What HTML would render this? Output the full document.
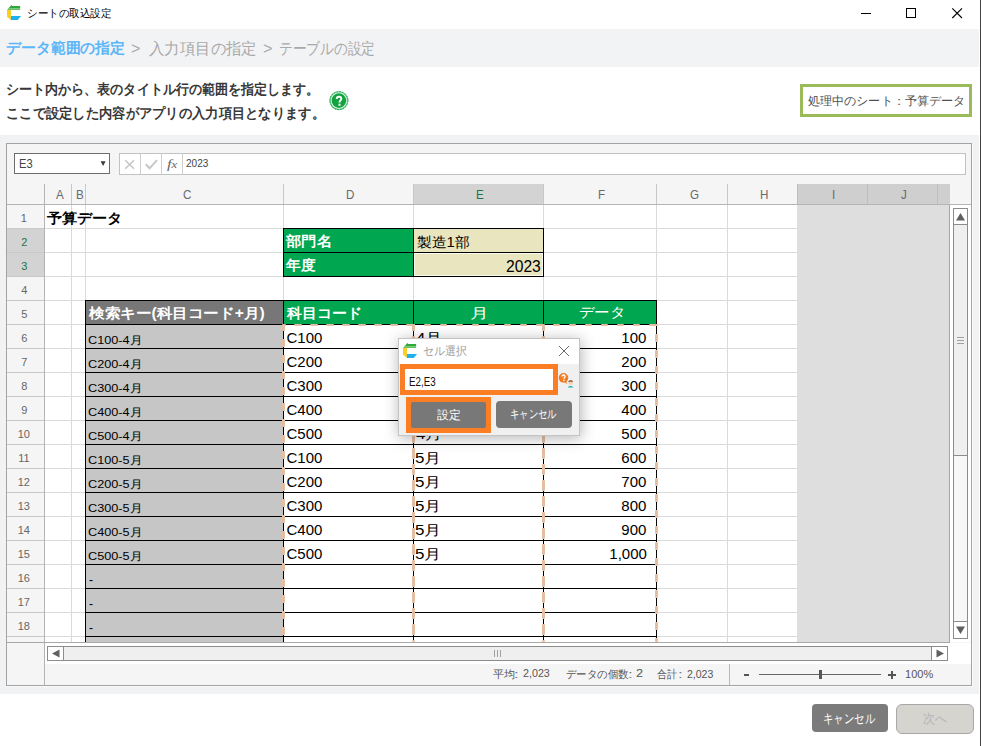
<!DOCTYPE html><html><head><meta charset="utf-8"><style>
*{margin:0;padding:0;box-sizing:border-box}
html,body{width:981px;height:746px;overflow:hidden;background:#fff;font-family:"Liberation Sans",sans-serif;position:relative}
.a{position:absolute}
.t{position:absolute;white-space:nowrap;line-height:1;transform-origin:0 0}
</style></head><body>
<svg class="a" style="left:6.95px;top:4.9px" width="16" height="17" viewBox="0 0 16 17">
<polygon points="0,5 4.45,0 5.25,1.1 13.15,1.1 13.15,3.4 1.9,3.4" fill="#2fa83a"/>
<polygon points="1.9,3.4 13.15,3.4 13.15,4.9 0,4.9 0,5" fill="#67bf5f"/>
<polygon points="0,4.9 3.95,4.9 3.95,14.9 0,11.8" fill="#fccf1f"/>
<polygon points="3.95,11 14.05,11 10.75,14.9 3.95,14.9" fill="#1eb1ef"/>
</svg>
<div class="t" style="left:26.54px;top:8.30px;font-size:11px;color:#000;font-weight:normal;font-family:'Liberation Sans',sans-serif;transform:scaleX(0.9593);">シートの取込設定</div>
<div class="a" style="left:861px;top:13px;width:10px;height:1px;background:#000"></div>
<div class="a" style="left:906px;top:8px;width:10px;height:10px;border:1px solid #000"></div>
<svg class="a" style="left:951px;top:7px" width="13" height="13" viewBox="0 0 13 13"><path d="M1.3 1.3L11 11M11 1.3L1.3 11" stroke="#000" stroke-width="1.1"/></svg>
<div class="a" style="left:980px;top:0px;width:1px;height:746px;background:#444"></div>
<div class="a" style="left:0px;top:29px;width:979px;height:38px;background:#f2f3f5"></div>
<div class="t" style="left:6.00px;top:40.00px;font-size:15px;color:#5cb6f8;font-weight:bold;font-family:'Liberation Sans',sans-serif;transform:scaleX(0.9917);">データ範囲の指定</div>
<div class="t" style="left:131.06px;top:39.80px;font-size:17px;color:#a9a9a9;font-weight:normal;font-family:'Liberation Sans',sans-serif;transform:scaleX(0.9444);">&gt;</div>
<div class="t" style="left:148.80px;top:40.50px;font-size:16px;color:#a9a9a9;font-weight:normal;font-family:'Liberation Sans',sans-serif;transform:scaleX(0.9622);">入力項目の指定</div>
<div class="t" style="left:263.03px;top:39.80px;font-size:17px;color:#a9a9a9;font-weight:normal;font-family:'Liberation Sans',sans-serif;transform:scaleX(0.9667);">&gt;</div>
<div class="t" style="left:278.94px;top:40.50px;font-size:16px;color:#a9a9a9;font-weight:normal;font-family:'Liberation Sans',sans-serif;transform:scaleX(0.8564);">テーブルの設定</div>
<div class="t" style="left:6.07px;top:82.00px;font-size:14px;color:#383838;font-weight:bold;font-family:'Liberation Sans',sans-serif;transform:scaleX(0.9325);">シート内から、表のタイトル行の範囲を指定します。</div>
<div class="t" style="left:6.05px;top:106.00px;font-size:14px;color:#383838;font-weight:bold;font-family:'Liberation Sans',sans-serif;transform:scaleX(0.9488);">ここで設定した内容がアプリの入力項目となります。</div>
<svg class="a" style="left:329px;top:91px" width="20" height="20" viewBox="0 0 20 20">
<circle cx="9.9" cy="9.6" r="9.6" fill="#7fd19a"/>
<circle cx="9.9" cy="9.6" r="8.9" fill="none" stroke="#1aa34a" stroke-width="1" stroke-dasharray="1.6 1.2"/>
<circle cx="9.9" cy="9.6" r="8.1" fill="#e8f7ec"/>
<circle cx="9.9" cy="9.6" r="7.3" fill="#12a340"/>
<path d="M7.7 8.0C7.7 6.4 8.7 5.7 10 5.7C11.4 5.7 12.3 6.5 12.3 7.7C12.3 9.3 10.5 9.5 10.5 11.4" stroke="#fff" stroke-width="1.9" fill="none"/>
<rect x="9.5" y="12.7" width="2" height="2.1" fill="#fff"/>
</svg>
<div class="a" style="left:800px;top:84px;width:172px;height:33px;border:3px solid #9bbb59"></div>
<div class="t" style="left:808.00px;top:94.80px;font-size:12px;color:#505050;font-weight:normal;font-family:'Liberation Sans',sans-serif;transform:scaleX(1.0078);">処理中のシート：予算データ</div>
<div class="a" style="left:0px;top:135px;width:979px;height:559px;background:#f1f2f4"></div>
<div class="a" style="left:6px;top:143px;width:966px;height:543px;border:1px solid #a3a3a3;background:#f5f5f5;box-shadow:1px 1px 0 #fafafa"></div>
<div class="a" style="left:14px;top:153px;width:96px;height:21px;border:1px solid #6d6d6d;background:#fff"></div>
<div class="t" style="left:18.91px;top:158.00px;font-size:12.5px;color:#444;font-weight:normal;font-family:'Liberation Sans',sans-serif;transform:scaleX(0.8929);">E3</div>
<svg class="a" style="left:100px;top:160px" width="7" height="7"><path d="M0.6 1.2L5.6 1.2L3.1 6Z" fill="#3a3a3a"/></svg>
<div class="a" style="left:119px;top:153px;width:847px;height:22px;border:1px solid #c2c2c2;background:#fff"></div>
<div class="a" style="left:140px;top:154px;width:1px;height:20px;background:#cfcfcf"></div>
<div class="a" style="left:161px;top:154px;width:1px;height:20px;background:#cfcfcf"></div>
<div class="a" style="left:182px;top:154px;width:1px;height:20px;background:#cfcfcf"></div>
<svg class="a" style="left:124px;top:159px" width="11" height="11"><path d="M1.2 1.2L10 9.8M10 1.2L1.2 9.8" stroke="#c6c6c6" stroke-width="1.6"/></svg>
<svg class="a" style="left:145px;top:159px" width="13" height="11"><path d="M0.8 5.2L4.6 9.3L12 1.2" stroke="#c6c6c6" stroke-width="2" fill="none"/></svg>
<div class="t" style="left:167.00px;top:157.20px;font-size:13px;color:#666;font-weight:normal;font-family:'Liberation Serif',serif;transform:scaleX(1.2750);"><i>f</i><span style="font-size:10px"><i>x</i></span></div>
<div class="t" style="left:185.60px;top:158.20px;font-size:11.5px;color:#444;font-weight:normal;font-family:'Liberation Sans',sans-serif;transform:scaleX(0.8731);">2023</div>
<div class="a" style="left:413px;top:184px;width:130px;height:20px;background:#d3d3d3"></div>
<div class="a" style="left:797px;top:184px;width:153px;height:20px;background:#cfcfcf"></div>
<div class="a" style="left:44px;top:184px;width:1px;height:20px;background:#c8c8c8"></div>
<div class="a" style="left:71px;top:184px;width:1px;height:20px;background:#c8c8c8"></div>
<div class="a" style="left:85px;top:184px;width:1px;height:20px;background:#c8c8c8"></div>
<div class="a" style="left:283px;top:184px;width:1px;height:20px;background:#c8c8c8"></div>
<div class="a" style="left:413px;top:184px;width:1px;height:20px;background:#c8c8c8"></div>
<div class="a" style="left:543px;top:184px;width:1px;height:20px;background:#c8c8c8"></div>
<div class="a" style="left:656px;top:184px;width:1px;height:20px;background:#c8c8c8"></div>
<div class="a" style="left:727px;top:184px;width:1px;height:20px;background:#c8c8c8"></div>
<div class="a" style="left:797px;top:184px;width:1px;height:20px;background:#bdbdbd"></div>
<div class="a" style="left:867px;top:184px;width:1px;height:20px;background:#bdbdbd"></div>
<div class="a" style="left:937px;top:184px;width:1px;height:20px;background:#bdbdbd"></div>
<div class="a" style="left:7px;top:204px;width:964px;height:1px;background:#b4b4b4"></div>
<div class="t" style="left:56.02px;top:189.00px;font-size:12px;color:#6a6a6a;font-weight:normal;font-family:'Liberation Sans',sans-serif;transform:scaleX(0.9700);">A</div>
<div class="t" style="left:76.04px;top:189.00px;font-size:12px;color:#6a6a6a;font-weight:normal;font-family:'Liberation Sans',sans-serif;transform:scaleX(0.9700);">B</div>
<div class="t" style="left:182.52px;top:189.00px;font-size:12px;color:#6a6a6a;font-weight:normal;font-family:'Liberation Sans',sans-serif;transform:scaleX(0.9700);">C</div>
<div class="t" style="left:346.03px;top:189.00px;font-size:12px;color:#6a6a6a;font-weight:normal;font-family:'Liberation Sans',sans-serif;transform:scaleX(0.9700);">D</div>
<div class="t" style="left:476.03px;top:189.00px;font-size:12px;color:#217346;font-weight:normal;font-family:'Liberation Sans',sans-serif;transform:scaleX(0.9700);">E</div>
<div class="t" style="left:598.02px;top:189.00px;font-size:12px;color:#6a6a6a;font-weight:normal;font-family:'Liberation Sans',sans-serif;transform:scaleX(0.9700);">F</div>
<div class="t" style="left:689.53px;top:189.00px;font-size:12px;color:#6a6a6a;font-weight:normal;font-family:'Liberation Sans',sans-serif;transform:scaleX(0.9700);">G</div>
<div class="t" style="left:760.03px;top:189.00px;font-size:12px;color:#6a6a6a;font-weight:normal;font-family:'Liberation Sans',sans-serif;transform:scaleX(0.9700);">H</div>
<div class="t" style="left:832.46px;top:189.00px;font-size:12px;color:#6a6a6a;font-weight:normal;font-family:'Liberation Sans',sans-serif;transform:scaleX(0.9700);">I</div>
<div class="t" style="left:901.49px;top:189.00px;font-size:12px;color:#6a6a6a;font-weight:normal;font-family:'Liberation Sans',sans-serif;transform:scaleX(0.9700);">J</div>
<div class="a" style="left:0;top:0;width:981px;height:642px;overflow:hidden">
<div class="a" style="left:45px;top:205px;width:752px;height:437px;background:#fff"></div>
<div class="a" style="left:797px;top:205px;width:152px;height:437px;background:#dedede"></div>
<div class="a" style="left:950px;top:205px;width:21px;height:437px;background:#fff"></div>
<div class="a" style="left:71px;top:205px;width:1px;height:437px;background:#dadada"></div>
<div class="a" style="left:85px;top:205px;width:1px;height:437px;background:#dadada"></div>
<div class="a" style="left:283px;top:205px;width:1px;height:437px;background:#dadada"></div>
<div class="a" style="left:413px;top:205px;width:1px;height:437px;background:#dadada"></div>
<div class="a" style="left:543px;top:205px;width:1px;height:437px;background:#dadada"></div>
<div class="a" style="left:656px;top:205px;width:1px;height:437px;background:#dadada"></div>
<div class="a" style="left:727px;top:205px;width:1px;height:437px;background:#dadada"></div>
<div class="a" style="left:949px;top:205px;width:1px;height:437px;background:#a8a8a8"></div>
<div class="a" style="left:7px;top:228px;width:37px;height:1px;background:#c8c8c8"></div>
<div class="a" style="left:45px;top:228px;width:752px;height:1px;background:#dadada"></div>
<div class="a" style="left:7px;top:252px;width:37px;height:1px;background:#c8c8c8"></div>
<div class="a" style="left:45px;top:252px;width:752px;height:1px;background:#dadada"></div>
<div class="a" style="left:7px;top:276px;width:37px;height:1px;background:#c8c8c8"></div>
<div class="a" style="left:45px;top:276px;width:752px;height:1px;background:#dadada"></div>
<div class="a" style="left:7px;top:300px;width:37px;height:1px;background:#c8c8c8"></div>
<div class="a" style="left:45px;top:300px;width:752px;height:1px;background:#dadada"></div>
<div class="a" style="left:7px;top:324px;width:37px;height:1px;background:#c8c8c8"></div>
<div class="a" style="left:45px;top:324px;width:752px;height:1px;background:#dadada"></div>
<div class="a" style="left:7px;top:348px;width:37px;height:1px;background:#c8c8c8"></div>
<div class="a" style="left:45px;top:348px;width:752px;height:1px;background:#dadada"></div>
<div class="a" style="left:7px;top:372px;width:37px;height:1px;background:#c8c8c8"></div>
<div class="a" style="left:45px;top:372px;width:752px;height:1px;background:#dadada"></div>
<div class="a" style="left:7px;top:396px;width:37px;height:1px;background:#c8c8c8"></div>
<div class="a" style="left:45px;top:396px;width:752px;height:1px;background:#dadada"></div>
<div class="a" style="left:7px;top:420px;width:37px;height:1px;background:#c8c8c8"></div>
<div class="a" style="left:45px;top:420px;width:752px;height:1px;background:#dadada"></div>
<div class="a" style="left:7px;top:444px;width:37px;height:1px;background:#c8c8c8"></div>
<div class="a" style="left:45px;top:444px;width:752px;height:1px;background:#dadada"></div>
<div class="a" style="left:7px;top:468px;width:37px;height:1px;background:#c8c8c8"></div>
<div class="a" style="left:45px;top:468px;width:752px;height:1px;background:#dadada"></div>
<div class="a" style="left:7px;top:492px;width:37px;height:1px;background:#c8c8c8"></div>
<div class="a" style="left:45px;top:492px;width:752px;height:1px;background:#dadada"></div>
<div class="a" style="left:7px;top:516px;width:37px;height:1px;background:#c8c8c8"></div>
<div class="a" style="left:45px;top:516px;width:752px;height:1px;background:#dadada"></div>
<div class="a" style="left:7px;top:540px;width:37px;height:1px;background:#c8c8c8"></div>
<div class="a" style="left:45px;top:540px;width:752px;height:1px;background:#dadada"></div>
<div class="a" style="left:7px;top:564px;width:37px;height:1px;background:#c8c8c8"></div>
<div class="a" style="left:45px;top:564px;width:752px;height:1px;background:#dadada"></div>
<div class="a" style="left:7px;top:588px;width:37px;height:1px;background:#c8c8c8"></div>
<div class="a" style="left:45px;top:588px;width:752px;height:1px;background:#dadada"></div>
<div class="a" style="left:7px;top:612px;width:37px;height:1px;background:#c8c8c8"></div>
<div class="a" style="left:45px;top:612px;width:752px;height:1px;background:#dadada"></div>
<div class="a" style="left:7px;top:636px;width:37px;height:1px;background:#c8c8c8"></div>
<div class="a" style="left:45px;top:636px;width:752px;height:1px;background:#dadada"></div>
<div class="a" style="left:7px;top:229px;width:37px;height:23px;background:#d3d3d3"></div>
<div class="a" style="left:7px;top:253px;width:37px;height:23px;background:#d3d3d3"></div>
<div class="t" style="left:20.70px;top:213.00px;font-size:11px;color:#666;font-weight:normal;font-family:'Liberation Sans',sans-serif;">1</div>
<div class="t" style="left:21.20px;top:237.00px;font-size:11px;color:#217346;font-weight:normal;font-family:'Liberation Sans',sans-serif;">2</div>
<div class="t" style="left:21.20px;top:261.00px;font-size:11px;color:#217346;font-weight:normal;font-family:'Liberation Sans',sans-serif;">3</div>
<div class="t" style="left:21.20px;top:285.00px;font-size:11px;color:#666;font-weight:normal;font-family:'Liberation Sans',sans-serif;">4</div>
<div class="t" style="left:21.20px;top:309.00px;font-size:11px;color:#666;font-weight:normal;font-family:'Liberation Sans',sans-serif;">5</div>
<div class="t" style="left:21.20px;top:333.00px;font-size:11px;color:#666;font-weight:normal;font-family:'Liberation Sans',sans-serif;">6</div>
<div class="t" style="left:21.20px;top:357.00px;font-size:11px;color:#666;font-weight:normal;font-family:'Liberation Sans',sans-serif;">7</div>
<div class="t" style="left:21.20px;top:381.00px;font-size:11px;color:#666;font-weight:normal;font-family:'Liberation Sans',sans-serif;">8</div>
<div class="t" style="left:21.20px;top:405.00px;font-size:11px;color:#666;font-weight:normal;font-family:'Liberation Sans',sans-serif;">9</div>
<div class="t" style="left:17.70px;top:429.00px;font-size:11px;color:#666;font-weight:normal;font-family:'Liberation Sans',sans-serif;">10</div>
<div class="t" style="left:18.20px;top:453.00px;font-size:11px;color:#666;font-weight:normal;font-family:'Liberation Sans',sans-serif;">11</div>
<div class="t" style="left:17.70px;top:477.00px;font-size:11px;color:#666;font-weight:normal;font-family:'Liberation Sans',sans-serif;">12</div>
<div class="t" style="left:17.70px;top:501.00px;font-size:11px;color:#666;font-weight:normal;font-family:'Liberation Sans',sans-serif;">13</div>
<div class="t" style="left:17.70px;top:525.00px;font-size:11px;color:#666;font-weight:normal;font-family:'Liberation Sans',sans-serif;">14</div>
<div class="t" style="left:17.70px;top:549.00px;font-size:11px;color:#666;font-weight:normal;font-family:'Liberation Sans',sans-serif;">15</div>
<div class="t" style="left:17.70px;top:573.00px;font-size:11px;color:#666;font-weight:normal;font-family:'Liberation Sans',sans-serif;">16</div>
<div class="t" style="left:17.70px;top:597.00px;font-size:11px;color:#666;font-weight:normal;font-family:'Liberation Sans',sans-serif;">17</div>
<div class="t" style="left:17.70px;top:621.00px;font-size:11px;color:#666;font-weight:normal;font-family:'Liberation Sans',sans-serif;">18</div>
<div class="t" style="left:47.40px;top:210.50px;font-size:14px;color:#000;font-weight:bold;font-family:'Liberation Sans',sans-serif;transform:scaleX(1.0794);">予算データ</div>
<div class="a" style="left:283px;top:228px;width:131px;height:25px;border:1px solid #000;background:#00a650"></div>
<div class="a" style="left:413px;top:228px;width:131px;height:25px;border:1px solid #000;background:#e9e5bf"></div>
<div class="a" style="left:283px;top:252px;width:131px;height:25px;border:1px solid #000;background:#00a650"></div>
<div class="a" style="left:413px;top:252px;width:131px;height:25px;border:1px solid #000;background:#e9e5bf"></div>
<div class="a" style="left:414px;top:253px;width:129px;height:23px;border:1px solid #fbfaf0"></div>
<div class="t" style="left:286.10px;top:234.20px;font-size:14px;color:#fff;font-weight:bold;font-family:'Liberation Sans',sans-serif;transform:scaleX(1.0950);">部門名</div>
<div class="t" style="left:286.40px;top:258.30px;font-size:14px;color:#fff;font-weight:bold;font-family:'Liberation Sans',sans-serif;transform:scaleX(1.0464);">年度</div>
<div class="t" style="left:416.80px;top:234.80px;font-size:14px;color:#000;font-weight:normal;font-family:'Liberation Sans',sans-serif;transform:scaleX(1.0580);">製造1部</div>
<div class="t" style="left:505.80px;top:258.50px;font-size:16px;color:#000;font-weight:normal;font-family:'Liberation Sans',sans-serif;transform:scaleX(0.9771);">2023</div>
<div class="a" style="left:85px;top:300px;width:199px;height:25px;border:1px solid #000;background:#777777"></div>
<div class="a" style="left:283px;top:300px;width:131px;height:25px;border:1px solid #000;background:#00a650"></div>
<div class="a" style="left:413px;top:300px;width:131px;height:25px;border:1px solid #000;background:#00a650"></div>
<div class="a" style="left:543px;top:300px;width:114px;height:25px;border:1px solid #000;background:#00a650"></div>
<div class="t" style="left:88.60px;top:306.30px;font-size:14px;color:#fff;font-weight:bold;font-family:'Liberation Sans',sans-serif;transform:scaleX(1.1153);">検索キー(科目コード+月)</div>
<div class="t" style="left:286.80px;top:306.40px;font-size:14px;color:#fff;font-weight:bold;font-family:'Liberation Sans',sans-serif;transform:scaleX(1.0681);">科目コード</div>
<div class="t" style="left:470.06px;top:306.00px;font-size:14px;color:#fff;font-weight:normal;font-family:'Liberation Sans',sans-serif;transform:scaleX(1.3400);">月</div>
<div class="t" style="left:578.50px;top:305.00px;font-size:14px;color:#fff;font-weight:normal;font-family:'Liberation Sans',sans-serif;transform:scaleX(1.1025);">データ</div>
<div class="a" style="left:85px;top:324px;width:199px;height:25px;border:1px solid #000;background:#c6c6c6"></div>
<div class="a" style="left:283px;top:324px;width:131px;height:25px;border:1px solid #000;"></div>
<div class="a" style="left:413px;top:324px;width:131px;height:25px;border:1px solid #000;"></div>
<div class="a" style="left:543px;top:324px;width:114px;height:25px;border:1px solid #000;"></div>
<div class="a" style="left:85px;top:348px;width:199px;height:25px;border:1px solid #000;background:#c6c6c6"></div>
<div class="a" style="left:283px;top:348px;width:131px;height:25px;border:1px solid #000;"></div>
<div class="a" style="left:413px;top:348px;width:131px;height:25px;border:1px solid #000;"></div>
<div class="a" style="left:543px;top:348px;width:114px;height:25px;border:1px solid #000;"></div>
<div class="a" style="left:85px;top:372px;width:199px;height:25px;border:1px solid #000;background:#c6c6c6"></div>
<div class="a" style="left:283px;top:372px;width:131px;height:25px;border:1px solid #000;"></div>
<div class="a" style="left:413px;top:372px;width:131px;height:25px;border:1px solid #000;"></div>
<div class="a" style="left:543px;top:372px;width:114px;height:25px;border:1px solid #000;"></div>
<div class="a" style="left:85px;top:396px;width:199px;height:25px;border:1px solid #000;background:#c6c6c6"></div>
<div class="a" style="left:283px;top:396px;width:131px;height:25px;border:1px solid #000;"></div>
<div class="a" style="left:413px;top:396px;width:131px;height:25px;border:1px solid #000;"></div>
<div class="a" style="left:543px;top:396px;width:114px;height:25px;border:1px solid #000;"></div>
<div class="a" style="left:85px;top:420px;width:199px;height:25px;border:1px solid #000;background:#c6c6c6"></div>
<div class="a" style="left:283px;top:420px;width:131px;height:25px;border:1px solid #000;"></div>
<div class="a" style="left:413px;top:420px;width:131px;height:25px;border:1px solid #000;"></div>
<div class="a" style="left:543px;top:420px;width:114px;height:25px;border:1px solid #000;"></div>
<div class="a" style="left:85px;top:444px;width:199px;height:25px;border:1px solid #000;background:#c6c6c6"></div>
<div class="a" style="left:283px;top:444px;width:131px;height:25px;border:1px solid #000;"></div>
<div class="a" style="left:413px;top:444px;width:131px;height:25px;border:1px solid #000;"></div>
<div class="a" style="left:543px;top:444px;width:114px;height:25px;border:1px solid #000;"></div>
<div class="a" style="left:85px;top:468px;width:199px;height:25px;border:1px solid #000;background:#c6c6c6"></div>
<div class="a" style="left:283px;top:468px;width:131px;height:25px;border:1px solid #000;"></div>
<div class="a" style="left:413px;top:468px;width:131px;height:25px;border:1px solid #000;"></div>
<div class="a" style="left:543px;top:468px;width:114px;height:25px;border:1px solid #000;"></div>
<div class="a" style="left:85px;top:492px;width:199px;height:25px;border:1px solid #000;background:#c6c6c6"></div>
<div class="a" style="left:283px;top:492px;width:131px;height:25px;border:1px solid #000;"></div>
<div class="a" style="left:413px;top:492px;width:131px;height:25px;border:1px solid #000;"></div>
<div class="a" style="left:543px;top:492px;width:114px;height:25px;border:1px solid #000;"></div>
<div class="a" style="left:85px;top:516px;width:199px;height:25px;border:1px solid #000;background:#c6c6c6"></div>
<div class="a" style="left:283px;top:516px;width:131px;height:25px;border:1px solid #000;"></div>
<div class="a" style="left:413px;top:516px;width:131px;height:25px;border:1px solid #000;"></div>
<div class="a" style="left:543px;top:516px;width:114px;height:25px;border:1px solid #000;"></div>
<div class="a" style="left:85px;top:540px;width:199px;height:25px;border:1px solid #000;background:#c6c6c6"></div>
<div class="a" style="left:283px;top:540px;width:131px;height:25px;border:1px solid #000;"></div>
<div class="a" style="left:413px;top:540px;width:131px;height:25px;border:1px solid #000;"></div>
<div class="a" style="left:543px;top:540px;width:114px;height:25px;border:1px solid #000;"></div>
<div class="a" style="left:85px;top:564px;width:199px;height:25px;border:1px solid #000;background:#c6c6c6"></div>
<div class="a" style="left:283px;top:564px;width:131px;height:25px;border:1px solid #000;"></div>
<div class="a" style="left:413px;top:564px;width:131px;height:25px;border:1px solid #000;"></div>
<div class="a" style="left:543px;top:564px;width:114px;height:25px;border:1px solid #000;"></div>
<div class="a" style="left:85px;top:588px;width:199px;height:25px;border:1px solid #000;background:#c6c6c6"></div>
<div class="a" style="left:283px;top:588px;width:131px;height:25px;border:1px solid #000;"></div>
<div class="a" style="left:413px;top:588px;width:131px;height:25px;border:1px solid #000;"></div>
<div class="a" style="left:543px;top:588px;width:114px;height:25px;border:1px solid #000;"></div>
<div class="a" style="left:85px;top:612px;width:199px;height:25px;border:1px solid #000;background:#c6c6c6"></div>
<div class="a" style="left:283px;top:612px;width:131px;height:25px;border:1px solid #000;"></div>
<div class="a" style="left:413px;top:612px;width:131px;height:25px;border:1px solid #000;"></div>
<div class="a" style="left:543px;top:612px;width:114px;height:25px;border:1px solid #000;"></div>
<div class="a" style="left:85px;top:636px;width:199px;height:25px;border:1px solid #000;background:#c6c6c6"></div>
<div class="a" style="left:283px;top:636px;width:131px;height:25px;border:1px solid #000;"></div>
<div class="a" style="left:413px;top:636px;width:131px;height:25px;border:1px solid #000;"></div>
<div class="a" style="left:543px;top:636px;width:114px;height:25px;border:1px solid #000;"></div>
<div class="t" style="left:89.00px;top:574.00px;font-size:12px;color:#000;font-weight:normal;font-family:'Liberation Sans',sans-serif;">-</div>
<div class="t" style="left:89.00px;top:598.00px;font-size:12px;color:#000;font-weight:normal;font-family:'Liberation Sans',sans-serif;">-</div>
<div class="t" style="left:89.00px;top:622.00px;font-size:12px;color:#000;font-weight:normal;font-family:'Liberation Sans',sans-serif;">-</div>
<div class="a" style="left:85px;top:636px;width:199px;height:25px;border:1px solid #000;background:#c6c6c6"></div>
<div class="a" style="left:283px;top:636px;width:131px;height:25px;border:1px solid #000;"></div>
<div class="a" style="left:413px;top:636px;width:131px;height:25px;border:1px solid #000;"></div>
<div class="a" style="left:543px;top:636px;width:114px;height:25px;border:1px solid #000;"></div>
<div class="t" style="left:88.10px;top:334.60px;font-size:11px;color:#000;font-weight:normal;font-family:'Liberation Sans',sans-serif;transform:scaleX(1.1533);">C100-4月</div>
<div class="t" style="left:286.50px;top:329.90px;font-size:15px;color:#000;font-weight:normal;font-family:'Liberation Sans',sans-serif;">C100</div>
<div class="t" style="left:416.20px;top:330.80px;font-size:14px;color:#000;font-weight:normal;font-family:'Liberation Sans',sans-serif;transform:scaleX(1.2100);">4月</div>
<div class="t" style="left:621.30px;top:329.90px;font-size:15px;color:#000;font-weight:normal;font-family:'Liberation Sans',sans-serif;">100</div>
<div class="t" style="left:88.10px;top:358.60px;font-size:11px;color:#000;font-weight:normal;font-family:'Liberation Sans',sans-serif;transform:scaleX(1.1533);">C200-4月</div>
<div class="t" style="left:286.50px;top:353.90px;font-size:15px;color:#000;font-weight:normal;font-family:'Liberation Sans',sans-serif;">C200</div>
<div class="t" style="left:416.20px;top:354.80px;font-size:14px;color:#000;font-weight:normal;font-family:'Liberation Sans',sans-serif;transform:scaleX(1.2100);">4月</div>
<div class="t" style="left:621.30px;top:353.90px;font-size:15px;color:#000;font-weight:normal;font-family:'Liberation Sans',sans-serif;">200</div>
<div class="t" style="left:88.10px;top:382.60px;font-size:11px;color:#000;font-weight:normal;font-family:'Liberation Sans',sans-serif;transform:scaleX(1.1533);">C300-4月</div>
<div class="t" style="left:286.50px;top:377.90px;font-size:15px;color:#000;font-weight:normal;font-family:'Liberation Sans',sans-serif;">C300</div>
<div class="t" style="left:416.20px;top:378.80px;font-size:14px;color:#000;font-weight:normal;font-family:'Liberation Sans',sans-serif;transform:scaleX(1.2100);">4月</div>
<div class="t" style="left:621.30px;top:377.90px;font-size:15px;color:#000;font-weight:normal;font-family:'Liberation Sans',sans-serif;">300</div>
<div class="t" style="left:88.10px;top:406.60px;font-size:11px;color:#000;font-weight:normal;font-family:'Liberation Sans',sans-serif;transform:scaleX(1.1533);">C400-4月</div>
<div class="t" style="left:286.50px;top:401.90px;font-size:15px;color:#000;font-weight:normal;font-family:'Liberation Sans',sans-serif;">C400</div>
<div class="t" style="left:416.20px;top:402.80px;font-size:14px;color:#000;font-weight:normal;font-family:'Liberation Sans',sans-serif;transform:scaleX(1.2100);">4月</div>
<div class="t" style="left:621.30px;top:401.90px;font-size:15px;color:#000;font-weight:normal;font-family:'Liberation Sans',sans-serif;">400</div>
<div class="t" style="left:88.10px;top:430.60px;font-size:11px;color:#000;font-weight:normal;font-family:'Liberation Sans',sans-serif;transform:scaleX(1.1533);">C500-4月</div>
<div class="t" style="left:286.50px;top:425.90px;font-size:15px;color:#000;font-weight:normal;font-family:'Liberation Sans',sans-serif;">C500</div>
<div class="t" style="left:416.20px;top:426.80px;font-size:14px;color:#000;font-weight:normal;font-family:'Liberation Sans',sans-serif;transform:scaleX(1.2100);">4月</div>
<div class="t" style="left:621.30px;top:425.90px;font-size:15px;color:#000;font-weight:normal;font-family:'Liberation Sans',sans-serif;">500</div>
<div class="t" style="left:88.10px;top:454.60px;font-size:11px;color:#000;font-weight:normal;font-family:'Liberation Sans',sans-serif;transform:scaleX(1.1533);">C100-5月</div>
<div class="t" style="left:286.50px;top:449.90px;font-size:15px;color:#000;font-weight:normal;font-family:'Liberation Sans',sans-serif;">C100</div>
<div class="t" style="left:414.99px;top:450.80px;font-size:14px;color:#000;font-weight:normal;font-family:'Liberation Sans',sans-serif;transform:scaleX(1.2100);">5月</div>
<div class="t" style="left:621.30px;top:449.90px;font-size:15px;color:#000;font-weight:normal;font-family:'Liberation Sans',sans-serif;">600</div>
<div class="t" style="left:88.10px;top:478.60px;font-size:11px;color:#000;font-weight:normal;font-family:'Liberation Sans',sans-serif;transform:scaleX(1.1533);">C200-5月</div>
<div class="t" style="left:286.50px;top:473.90px;font-size:15px;color:#000;font-weight:normal;font-family:'Liberation Sans',sans-serif;">C200</div>
<div class="t" style="left:414.99px;top:474.80px;font-size:14px;color:#000;font-weight:normal;font-family:'Liberation Sans',sans-serif;transform:scaleX(1.2100);">5月</div>
<div class="t" style="left:621.30px;top:473.90px;font-size:15px;color:#000;font-weight:normal;font-family:'Liberation Sans',sans-serif;">700</div>
<div class="t" style="left:88.10px;top:502.60px;font-size:11px;color:#000;font-weight:normal;font-family:'Liberation Sans',sans-serif;transform:scaleX(1.1533);">C300-5月</div>
<div class="t" style="left:286.50px;top:497.90px;font-size:15px;color:#000;font-weight:normal;font-family:'Liberation Sans',sans-serif;">C300</div>
<div class="t" style="left:414.99px;top:498.80px;font-size:14px;color:#000;font-weight:normal;font-family:'Liberation Sans',sans-serif;transform:scaleX(1.2100);">5月</div>
<div class="t" style="left:621.30px;top:497.90px;font-size:15px;color:#000;font-weight:normal;font-family:'Liberation Sans',sans-serif;">800</div>
<div class="t" style="left:88.10px;top:526.60px;font-size:11px;color:#000;font-weight:normal;font-family:'Liberation Sans',sans-serif;transform:scaleX(1.1533);">C400-5月</div>
<div class="t" style="left:286.50px;top:521.90px;font-size:15px;color:#000;font-weight:normal;font-family:'Liberation Sans',sans-serif;">C400</div>
<div class="t" style="left:414.99px;top:522.80px;font-size:14px;color:#000;font-weight:normal;font-family:'Liberation Sans',sans-serif;transform:scaleX(1.2100);">5月</div>
<div class="t" style="left:621.30px;top:521.90px;font-size:15px;color:#000;font-weight:normal;font-family:'Liberation Sans',sans-serif;">900</div>
<div class="t" style="left:88.10px;top:550.60px;font-size:11px;color:#000;font-weight:normal;font-family:'Liberation Sans',sans-serif;transform:scaleX(1.1533);">C500-5月</div>
<div class="t" style="left:286.50px;top:545.90px;font-size:15px;color:#000;font-weight:normal;font-family:'Liberation Sans',sans-serif;">C500</div>
<div class="t" style="left:414.99px;top:546.80px;font-size:14px;color:#000;font-weight:normal;font-family:'Liberation Sans',sans-serif;transform:scaleX(1.2100);">5月</div>
<div class="t" style="left:609.30px;top:545.90px;font-size:15px;color:#000;font-weight:normal;font-family:'Liberation Sans',sans-serif;">1,000</div>
<div class="a" style="left:284px;top:324px;width:1.5px;height:2px;background:#e5bea2;border-radius:1px"></div>
<div class="a" style="left:294px;top:324px;width:7.5px;height:2px;background:#e5bea2;border-radius:1px"></div>
<div class="a" style="left:310px;top:324px;width:7.5px;height:2px;background:#e5bea2;border-radius:1px"></div>
<div class="a" style="left:326px;top:324px;width:7.5px;height:2px;background:#e5bea2;border-radius:1px"></div>
<div class="a" style="left:342px;top:324px;width:7.5px;height:2px;background:#e5bea2;border-radius:1px"></div>
<div class="a" style="left:358px;top:324px;width:7.5px;height:2px;background:#e5bea2;border-radius:1px"></div>
<div class="a" style="left:374px;top:324px;width:7.5px;height:2px;background:#e5bea2;border-radius:1px"></div>
<div class="a" style="left:390px;top:324px;width:7.5px;height:2px;background:#e5bea2;border-radius:1px"></div>
<div class="a" style="left:406px;top:324px;width:7px;height:2px;background:#e5bea2;border-radius:1px"></div>
<div class="a" style="left:414px;top:324px;width:1.2px;height:2px;background:#e5bea2;border-radius:1px"></div>
<div class="a" style="left:423.7px;top:324px;width:7.5px;height:2px;background:#e5bea2;border-radius:1px"></div>
<div class="a" style="left:439.7px;top:324px;width:7.5px;height:2px;background:#e5bea2;border-radius:1px"></div>
<div class="a" style="left:455.7px;top:324px;width:7.5px;height:2px;background:#e5bea2;border-radius:1px"></div>
<div class="a" style="left:471.7px;top:324px;width:7.5px;height:2px;background:#e5bea2;border-radius:1px"></div>
<div class="a" style="left:487.7px;top:324px;width:7.5px;height:2px;background:#e5bea2;border-radius:1px"></div>
<div class="a" style="left:503.7px;top:324px;width:7.5px;height:2px;background:#e5bea2;border-radius:1px"></div>
<div class="a" style="left:519.7px;top:324px;width:7.5px;height:2px;background:#e5bea2;border-radius:1px"></div>
<div class="a" style="left:535.7px;top:324px;width:7.3px;height:2px;background:#e5bea2;border-radius:1px"></div>
<div class="a" style="left:552.7px;top:324px;width:7.3px;height:2px;background:#e5bea2;border-radius:1px"></div>
<div class="a" style="left:568.7px;top:324px;width:7.3px;height:2px;background:#e5bea2;border-radius:1px"></div>
<div class="a" style="left:584.7px;top:324px;width:7.3px;height:2px;background:#e5bea2;border-radius:1px"></div>
<div class="a" style="left:600.7px;top:324px;width:7.3px;height:2px;background:#e5bea2;border-radius:1px"></div>
<div class="a" style="left:616.7px;top:324px;width:7.3px;height:2px;background:#e5bea2;border-radius:1px"></div>
<div class="a" style="left:632.7px;top:324px;width:7.3px;height:2px;background:#e5bea2;border-radius:1px"></div>
<div class="a" style="left:648.7px;top:324px;width:7.3px;height:2px;background:#e5bea2;border-radius:1px"></div>
<div class="a" style="left:282px;top:324px;width:3px;height:6.5px;background:#e5bea2;border-radius:1px"></div>
<div class="a" style="left:282px;top:338.5px;width:3px;height:8.0px;background:#e5bea2;border-radius:1px"></div>
<div class="a" style="left:282px;top:354.5px;width:3px;height:8.0px;background:#e5bea2;border-radius:1px"></div>
<div class="a" style="left:282px;top:370.5px;width:3px;height:8.0px;background:#e5bea2;border-radius:1px"></div>
<div class="a" style="left:282px;top:386.5px;width:3px;height:8.0px;background:#e5bea2;border-radius:1px"></div>
<div class="a" style="left:282px;top:402.5px;width:3px;height:8.0px;background:#e5bea2;border-radius:1px"></div>
<div class="a" style="left:282px;top:418.5px;width:3px;height:8.0px;background:#e5bea2;border-radius:1px"></div>
<div class="a" style="left:282px;top:434.5px;width:3px;height:8.0px;background:#e5bea2;border-radius:1px"></div>
<div class="a" style="left:282px;top:450.5px;width:3px;height:8.0px;background:#e5bea2;border-radius:1px"></div>
<div class="a" style="left:282px;top:466.5px;width:3px;height:8.0px;background:#e5bea2;border-radius:1px"></div>
<div class="a" style="left:282px;top:482.5px;width:3px;height:8.0px;background:#e5bea2;border-radius:1px"></div>
<div class="a" style="left:282px;top:498.5px;width:3px;height:8.0px;background:#e5bea2;border-radius:1px"></div>
<div class="a" style="left:282px;top:514.5px;width:3px;height:8.0px;background:#e5bea2;border-radius:1px"></div>
<div class="a" style="left:282px;top:530.5px;width:3px;height:8.0px;background:#e5bea2;border-radius:1px"></div>
<div class="a" style="left:282px;top:546.5px;width:3px;height:8.0px;background:#e5bea2;border-radius:1px"></div>
<div class="a" style="left:282px;top:562.5px;width:3px;height:8.0px;background:#e5bea2;border-radius:1px"></div>
<div class="a" style="left:282px;top:578.5px;width:3px;height:8.0px;background:#e5bea2;border-radius:1px"></div>
<div class="a" style="left:282px;top:594.5px;width:3px;height:8.0px;background:#e5bea2;border-radius:1px"></div>
<div class="a" style="left:282px;top:610.5px;width:3px;height:8.0px;background:#e5bea2;border-radius:1px"></div>
<div class="a" style="left:282px;top:626.5px;width:3px;height:8.0px;background:#e5bea2;border-radius:1px"></div>
<div class="a" style="left:412px;top:324px;width:3px;height:6.5px;background:#e5bea2;border-radius:1px"></div>
<div class="a" style="left:412px;top:336px;width:3px;height:10.5px;background:#e5bea2;border-radius:1px"></div>
<div class="a" style="left:412px;top:352px;width:3px;height:10.5px;background:#e5bea2;border-radius:1px"></div>
<div class="a" style="left:412px;top:368px;width:3px;height:10.5px;background:#e5bea2;border-radius:1px"></div>
<div class="a" style="left:412px;top:384px;width:3px;height:10.5px;background:#e5bea2;border-radius:1px"></div>
<div class="a" style="left:412px;top:400px;width:3px;height:10.5px;background:#e5bea2;border-radius:1px"></div>
<div class="a" style="left:412px;top:416px;width:3px;height:10.5px;background:#e5bea2;border-radius:1px"></div>
<div class="a" style="left:412px;top:432px;width:3px;height:10.5px;background:#e5bea2;border-radius:1px"></div>
<div class="a" style="left:412px;top:448px;width:3px;height:10.5px;background:#e5bea2;border-radius:1px"></div>
<div class="a" style="left:412px;top:464px;width:3px;height:10.5px;background:#e5bea2;border-radius:1px"></div>
<div class="a" style="left:412px;top:480px;width:3px;height:10.5px;background:#e5bea2;border-radius:1px"></div>
<div class="a" style="left:412px;top:496px;width:3px;height:10.5px;background:#e5bea2;border-radius:1px"></div>
<div class="a" style="left:412px;top:512px;width:3px;height:10.5px;background:#e5bea2;border-radius:1px"></div>
<div class="a" style="left:412px;top:528px;width:3px;height:10.5px;background:#e5bea2;border-radius:1px"></div>
<div class="a" style="left:412px;top:544px;width:3px;height:10.5px;background:#e5bea2;border-radius:1px"></div>
<div class="a" style="left:412px;top:560px;width:3px;height:10.5px;background:#e5bea2;border-radius:1px"></div>
<div class="a" style="left:412px;top:576px;width:3px;height:10.5px;background:#e5bea2;border-radius:1px"></div>
<div class="a" style="left:412px;top:592px;width:3px;height:10.5px;background:#e5bea2;border-radius:1px"></div>
<div class="a" style="left:412px;top:608px;width:3px;height:10.5px;background:#e5bea2;border-radius:1px"></div>
<div class="a" style="left:412px;top:624px;width:3px;height:10.5px;background:#e5bea2;border-radius:1px"></div>
<div class="a" style="left:412px;top:640px;width:3px;height:2px;background:#e5bea2;border-radius:1px"></div>
<div class="a" style="left:542px;top:324px;width:3px;height:7px;background:#e5bea2;border-radius:1px"></div>
<div class="a" style="left:542px;top:336px;width:3px;height:11px;background:#e5bea2;border-radius:1px"></div>
<div class="a" style="left:542px;top:352px;width:3px;height:11px;background:#e5bea2;border-radius:1px"></div>
<div class="a" style="left:542px;top:368px;width:3px;height:11px;background:#e5bea2;border-radius:1px"></div>
<div class="a" style="left:542px;top:384px;width:3px;height:11px;background:#e5bea2;border-radius:1px"></div>
<div class="a" style="left:542px;top:400px;width:3px;height:11px;background:#e5bea2;border-radius:1px"></div>
<div class="a" style="left:542px;top:416px;width:3px;height:11px;background:#e5bea2;border-radius:1px"></div>
<div class="a" style="left:542px;top:432px;width:3px;height:11px;background:#e5bea2;border-radius:1px"></div>
<div class="a" style="left:542px;top:448px;width:3px;height:11px;background:#e5bea2;border-radius:1px"></div>
<div class="a" style="left:542px;top:464px;width:3px;height:11px;background:#e5bea2;border-radius:1px"></div>
<div class="a" style="left:542px;top:480px;width:3px;height:11px;background:#e5bea2;border-radius:1px"></div>
<div class="a" style="left:542px;top:496px;width:3px;height:11px;background:#e5bea2;border-radius:1px"></div>
<div class="a" style="left:542px;top:512px;width:3px;height:11px;background:#e5bea2;border-radius:1px"></div>
<div class="a" style="left:542px;top:528px;width:3px;height:11px;background:#e5bea2;border-radius:1px"></div>
<div class="a" style="left:542px;top:544px;width:3px;height:11px;background:#e5bea2;border-radius:1px"></div>
<div class="a" style="left:542px;top:560px;width:3px;height:11px;background:#e5bea2;border-radius:1px"></div>
<div class="a" style="left:542px;top:576px;width:3px;height:11px;background:#e5bea2;border-radius:1px"></div>
<div class="a" style="left:542px;top:592px;width:3px;height:11px;background:#e5bea2;border-radius:1px"></div>
<div class="a" style="left:542px;top:608px;width:3px;height:11px;background:#e5bea2;border-radius:1px"></div>
<div class="a" style="left:542px;top:624px;width:3px;height:11px;background:#e5bea2;border-radius:1px"></div>
<div class="a" style="left:542px;top:640px;width:3px;height:2px;background:#e5bea2;border-radius:1px"></div>
<div class="a" style="left:655px;top:324px;width:3px;height:2px;background:#e5bea2;border-radius:1px"></div>
<div class="a" style="left:655px;top:334px;width:3px;height:8px;background:#e5bea2;border-radius:1px"></div>
<div class="a" style="left:655px;top:350px;width:3px;height:8px;background:#e5bea2;border-radius:1px"></div>
<div class="a" style="left:655px;top:366px;width:3px;height:8px;background:#e5bea2;border-radius:1px"></div>
<div class="a" style="left:655px;top:382px;width:3px;height:8px;background:#e5bea2;border-radius:1px"></div>
<div class="a" style="left:655px;top:398px;width:3px;height:8px;background:#e5bea2;border-radius:1px"></div>
<div class="a" style="left:655px;top:414px;width:3px;height:8px;background:#e5bea2;border-radius:1px"></div>
<div class="a" style="left:655px;top:430px;width:3px;height:8px;background:#e5bea2;border-radius:1px"></div>
<div class="a" style="left:655px;top:446px;width:3px;height:8px;background:#e5bea2;border-radius:1px"></div>
<div class="a" style="left:655px;top:462px;width:3px;height:8px;background:#e5bea2;border-radius:1px"></div>
<div class="a" style="left:655px;top:478px;width:3px;height:8px;background:#e5bea2;border-radius:1px"></div>
<div class="a" style="left:655px;top:494px;width:3px;height:8px;background:#e5bea2;border-radius:1px"></div>
<div class="a" style="left:655px;top:510px;width:3px;height:8px;background:#e5bea2;border-radius:1px"></div>
<div class="a" style="left:655px;top:526px;width:3px;height:8px;background:#e5bea2;border-radius:1px"></div>
<div class="a" style="left:655px;top:542px;width:3px;height:8px;background:#e5bea2;border-radius:1px"></div>
<div class="a" style="left:655px;top:558px;width:3px;height:8px;background:#e5bea2;border-radius:1px"></div>
<div class="a" style="left:655px;top:574px;width:3px;height:8px;background:#e5bea2;border-radius:1px"></div>
<div class="a" style="left:655px;top:590px;width:3px;height:8px;background:#e5bea2;border-radius:1px"></div>
<div class="a" style="left:655px;top:606px;width:3px;height:8px;background:#e5bea2;border-radius:1px"></div>
<div class="a" style="left:655px;top:622px;width:3px;height:8px;background:#e5bea2;border-radius:1px"></div>
<div class="a" style="left:655px;top:638px;width:3px;height:4px;background:#e5bea2;border-radius:1px"></div>
</div>
<div class="a" style="left:45px;top:643px;width:926px;height:21px;background:#fff"></div>
<div class="a" style="left:44px;top:184px;width:1px;height:502px;background:#b4b4b4"></div>
<div class="a" style="left:7px;top:642px;width:943px;height:1px;background:#a8a8a8"></div>
<div class="a" style="left:953px;top:208px;width:15px;height:431px;border:1px solid #8c8c8c;background:#f7f7f7"></div>
<div class="a" style="left:954px;top:209px;width:13px;height:16px;background:#fff;border-bottom:1px solid #8c8c8c"></div>
<div class="a" style="left:954px;top:225px;width:13px;height:231px;background:#efefef;border-bottom:1px solid #8c8c8c"></div>
<div class="a" style="left:954px;top:621px;width:13px;height:17px;background:#fff;border-top:1px solid #8c8c8c"></div>
<svg class="a" style="left:954px;top:211px" width="13" height="12"><path d="M2 9.5L6.5 2L11 9.5Z" fill="#606060"/></svg>
<svg class="a" style="left:954px;top:624px" width="13" height="12"><path d="M2 2.5L6.5 10L11 2.5Z" fill="#606060"/></svg>
<div class="a" style="left:957px;top:337px;width:7px;height:1px;background:#a0a0a0"></div>
<div class="a" style="left:957px;top:340px;width:7px;height:1px;background:#a0a0a0"></div>
<div class="a" style="left:957px;top:343px;width:7px;height:1px;background:#a0a0a0"></div>
<div class="a" style="left:47px;top:646px;width:901px;height:15px;border:1px solid #8c8c8c;background:#efefef"></div>
<div class="a" style="left:48px;top:647px;width:16px;height:13px;background:#fff;border-right:1px solid #8c8c8c"></div>
<div class="a" style="left:931px;top:647px;width:16px;height:13px;background:#fff;border-left:1px solid #8c8c8c"></div>
<svg class="a" style="left:49px;top:647px" width="14" height="13"><path d="M3 6.5L10.5 2.5L10.5 10.5Z" fill="#606060"/></svg>
<svg class="a" style="left:933px;top:647px" width="14" height="13"><path d="M11 6.5L3.5 2.5L3.5 10.5Z" fill="#606060"/></svg>
<div class="a" style="left:494px;top:650px;width:1px;height:7px;background:#a0a0a0"></div>
<div class="a" style="left:497px;top:650px;width:1px;height:7px;background:#a0a0a0"></div>
<div class="a" style="left:500px;top:650px;width:1px;height:7px;background:#a0a0a0"></div>
<div class="t" style="left:492.90px;top:668.50px;font-size:11px;color:#555;font-weight:normal;font-family:'Liberation Sans',sans-serif;transform:scaleX(1.0095);">平均</div>
<div class="t" style="left:514.00px;top:670.00px;font-size:10px;color:#777;font-weight:normal;font-family:'Liberation Sans',sans-serif;transform:scaleX(1.7000);">:</div>
<div class="t" style="left:523.00px;top:668.30px;font-size:11.5px;color:#555;font-weight:normal;font-family:'Liberation Sans',sans-serif;transform:scaleX(0.9310);">2,023</div>
<div class="t" style="left:565.50px;top:668.50px;font-size:11px;color:#555;font-weight:normal;font-family:'Liberation Sans',sans-serif;transform:scaleX(0.9515);">データの個数</div>
<div class="t" style="left:628.30px;top:670.00px;font-size:10px;color:#777;font-weight:normal;font-family:'Liberation Sans',sans-serif;transform:scaleX(1.7000);">:</div>
<div class="t" style="left:635.60px;top:668.30px;font-size:11.5px;color:#555;font-weight:normal;font-family:'Liberation Sans',sans-serif;transform:scaleX(1.1000);">2</div>
<div class="t" style="left:656.90px;top:668.90px;font-size:11px;color:#555;font-weight:normal;font-family:'Liberation Sans',sans-serif;transform:scaleX(0.9091);">合計</div>
<div class="t" style="left:678.10px;top:670.00px;font-size:10px;color:#777;font-weight:normal;font-family:'Liberation Sans',sans-serif;transform:scaleX(1.7000);">:</div>
<div class="t" style="left:687.10px;top:668.50px;font-size:11.5px;color:#555;font-weight:normal;font-family:'Liberation Sans',sans-serif;transform:scaleX(0.9138);">2,023</div>
<div class="a" style="left:729px;top:664px;width:1px;height:21px;background:#b8b8b8"></div>
<div class="a" style="left:744px;top:674px;width:5px;height:2px;background:#555"></div>
<div class="a" style="left:759px;top:674px;width:122px;height:1px;background:#666"></div>
<div class="a" style="left:819px;top:670px;width:3px;height:9px;background:#555"></div>
<div class="a" style="left:888px;top:674px;width:8px;height:2px;background:#555"></div>
<div class="a" style="left:891px;top:671px;width:2px;height:8px;background:#555"></div>
<div class="t" style="left:905.20px;top:669.00px;font-size:11px;color:#555;font-weight:normal;font-family:'Liberation Sans',sans-serif;transform:scaleX(1.0037);">100%</div>
<div class="a" style="left:812px;top:704px;width:76px;height:28px;border-radius:4px;background:#7b7b7b"></div>
<div class="t" style="left:823.00px;top:712.20px;font-size:13px;color:#fff;font-weight:normal;font-family:'Liberation Sans',sans-serif;transform:scaleX(0.8031);">キャンセル</div>
<div class="a" style="left:896px;top:704px;width:78px;height:30px;border-radius:6px;background:#d5d4cf;border:1px solid #a8a8a8"></div>
<div class="t" style="left:922.80px;top:712.20px;font-size:13px;color:#b4b4b4;font-weight:normal;font-family:'Liberation Sans',sans-serif;transform:scaleX(0.9269);">次へ</div>
<div class="a" style="left:398px;top:338px;width:182px;height:98px;border:1px solid #c4c4c4;background:#f0f0f0;box-shadow:1px 2px 14px rgba(0,0,0,0.3)"></div>
<div class="a" style="left:399px;top:339px;width:180px;height:25px;background:#fff"></div>
<svg class="a" style="left:402.9px;top:343.3px" width="16" height="17" viewBox="0 0 16 17">
<polygon points="0,5 4.45,0 5.25,1.1 13.15,1.1 13.15,3.4 1.9,3.4" fill="#2fa83a"/>
<polygon points="1.9,3.4 13.15,3.4 13.15,4.9 0,4.9 0,5" fill="#67bf5f"/>
<polygon points="0,4.9 3.95,4.9 3.95,14.9 0,11.8" fill="#fccf1f"/>
<polygon points="3.95,11 14.05,11 10.75,14.9 3.95,14.9" fill="#1eb1ef"/>
</svg>
<div class="t" style="left:422.59px;top:346.00px;font-size:11.5px;color:#a0a0a0;font-weight:normal;font-family:'Liberation Sans',sans-serif;transform:scaleX(0.9128);">セル選択</div>
<svg class="a" style="left:558px;top:345px" width="12" height="12"><path d="M1 1L11 11M11 1L1 11" stroke="#6a6a6a" stroke-width="1"/></svg>
<div class="a" style="left:400px;top:364px;width:158px;height:31px;background:#fb7e24"></div>
<div class="a" style="left:405px;top:369px;width:148px;height:21px;background:#fff"></div>
<div class="t" style="left:408.88px;top:376.20px;font-size:12px;color:#111;font-weight:normal;font-family:'Liberation Sans',sans-serif;transform:scaleX(0.8187);">E2,E3</div>
<svg class="a" style="left:558px;top:372px" width="17" height="16" viewBox="0 0 17 16">
<circle cx="5.5" cy="5.8" r="4.8" fill="#f07c22"/>
<path d="M3.9 4.6C3.9 3.6 4.6 3 5.5 3C6.5 3 7.1 3.6 7.1 4.4C7.1 5.4 5.9 5.6 5.9 6.7" stroke="#fff" stroke-width="1.3" fill="none"/>
<rect x="5.2" y="7.6" width="1.4" height="1.4" fill="#fff"/>
<polygon points="7.2,8.8 9.6,12.2 5.8,9.9" fill="#f07c22"/>
<circle cx="12.6" cy="11" r="2.1" fill="#f8cfa8"/>
<path d="M10.3 10.2C10.1 7.6 15.1 7.4 14.9 10.2C14 9.4 11.2 9.4 10.3 10.2Z" fill="#7a3d14"/>
<path d="M9.9 15.6C10 13.3 15.2 13.3 15.3 15.6Z" fill="#1ab0bf"/>
</svg>
<div class="a" style="left:406px;top:397px;width:85px;height:36px;background:#fb7e24"></div>
<div class="a" style="left:411px;top:402px;width:75px;height:26px;border-radius:2px;background:#787878"></div>
<div class="t" style="left:437.40px;top:410.00px;font-size:11.5px;color:#fff;font-weight:normal;font-family:'Liberation Sans',sans-serif;transform:scaleX(0.9913);">設定</div>
<div class="a" style="left:496px;top:401px;width:76px;height:27px;border-radius:4px;background:#787878"></div>
<div class="t" style="left:510.22px;top:408.20px;font-size:12px;color:#fff;font-weight:normal;font-family:'Liberation Sans',sans-serif;transform:scaleX(0.7797);">キャンセル</div>
</body></html>
